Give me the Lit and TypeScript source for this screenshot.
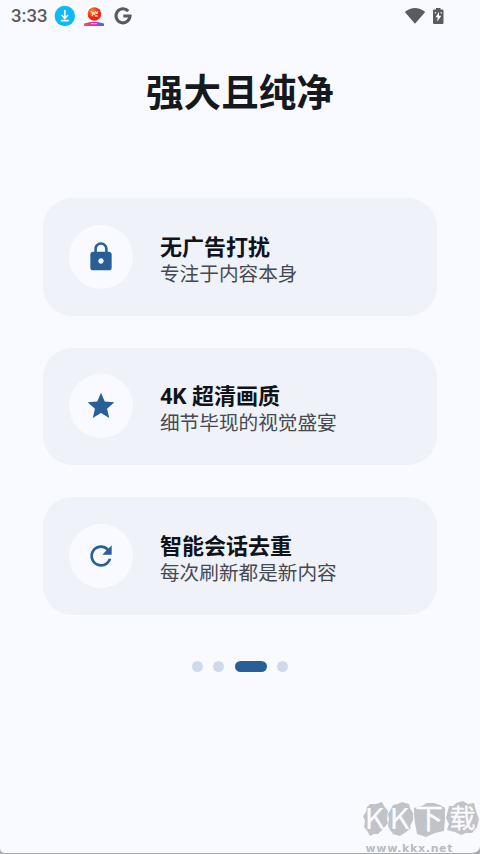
import { LitElement, html, css } from "lit";
import { customElement } from "lit/decorators.js";

const LOCK = "M18 8h-1V6c0-2.76-2.24-5-5-5S7 3.24 7 6v2H6c-1.1 0-2 .9-2 2v10c0 1.1.9 2 2 2h12c1.1 0 2-.9 2-2V10c0-1.1-.9-2-2-2zm-6 9c-1.1 0-2-.9-2-2s.9-2 2-2 2 .9 2 2-.9 2-2 2zm3.1-9H8.9V6c0-1.71 1.39-3.1 3.1-3.1 1.71 0 3.1 1.39 3.1 3.1v2z";
const STAR = "M12 17.27L18.18 21l-1.64-7.03L22 9.24l-7.19-.61L12 2 9.19 8.63 2 9.24l5.46 4.73L5.82 21z";
const REFRESH = "M17.65 6.35C16.2 4.9 14.21 4 12 4c-4.42 0-7.99 3.58-7.99 8s3.57 8 7.99 8c3.73 0 6.84-2.55 7.73-6h-2.08c-.82 2.33-3.04 4-5.65 4-3.31 0-6-2.69-6-6s2.69-6 6-6c1.66 0 3.14.69 4.22 1.78L13 11h7V4l-2.35 2.35z";

const FEATURES = [
  { icon: LOCK, title: "无广告打扰", text: "专注于内容本身" },
  { icon: STAR, title: "4K 超清画质", text: "细节毕现的视觉盛宴" },
  { icon: REFRESH, title: "智能会话去重", text: "每次刷新都是新内容" },
];

@customElement("status-bar")
class StatusBar extends LitElement {
  static styles = css`
    :host { display: flex; align-items: center; height: 32px; padding: 0 36px 0 11px; box-sizing: border-box; color: #5a5b5f; }
    .time { font: 500 18.6px/33px Roboto, sans-serif; width: 43px; }
    svg { display: block; flex: none; overflow: visible; }
    .g { margin-left: 10px; }
    .app { margin-left: 8px; }
    .space { flex: 1; }
    .bat { margin-left: 7px; }
  `;
  render() {
    return html`
      <span class="time">3:33</span>
      <svg width="22" height="22" viewBox="0 0 22 22"><circle cx="10.8" cy="11" r="10.2" fill="#0cb9fb"/><path d="M10.8 5v8M7.5 10l3.3 3.3 3.3-3.3M6.8 15.7h8" fill="none" stroke="#fff" stroke-width="1.7"/></svg>
      <svg class="app" width="20" height="20" viewBox="0 0 20 20"><defs><linearGradient id="b"><stop offset="0" stop-color="#ff5147"/><stop offset=".5" stop-color="#d42ac0"/><stop offset="1" stop-color="#2678f5"/></linearGradient><radialGradient id="r" cx=".35" cy=".3"><stop offset="0" stop-color="#ff8a25"/><stop offset="1" stop-color="#ee2310"/></radialGradient></defs><path d="M0 0h20v20H0z" fill="#fff"/><circle cx="10.4" cy="8" r="6.8" fill="url(#r)"/><path d="M7 5l2 3 1-2M9 8l-1 2M10.5 9l1-4 1.2 3L14 5M11 10h3" fill="none" stroke="#fff" stroke-width="1"/><path d="M0 20v-2.500Q10 14 20 17.5V20z" fill="url(#b)"/><path d="M7 17.7h6" stroke="#fff" stroke-width=".8"/></svg>
      <svg class="g" width="18" height="18" viewBox="0 0 18 18"><path d="M14.2 4.1A7 7 0 1 0 16 9H9.3" fill="none" stroke="currentColor" stroke-width="3.1"/></svg>
      <span class="space"></span>
      <svg width="20" height="17" viewBox="0 0 20 17"><path d="M-1.2 4Q9-4 19.200 4L9 15.7z" fill="currentColor"/></svg>
      <svg class="bat" width="11" height="17" viewBox="0 0 11 17"><path d="M3 0h4.5v1.5H9.5Q10.5 1.5 10.5 2.5V15Q10.5 16 9.500 16H1Q0 16 0 15V2.5Q0 1.5 1 1.5H3z" fill="currentColor"/><path d="M6 4L2.5 9.2h2.2l-.5 4.6 4.1-6H6z" fill="#fff"/><circle cx="2.5" cy="4.7" r=".8" fill="#fff"/><circle cx="8.2" cy="4.7" r=".8" fill="#fff"/></svg>
    `;
  }
}

@customElement("feature-card")
class FeatureCard extends LitElement {
  static properties = { icon: {}, heading: {}, text: {} };
  declare icon: string;
  declare heading: string;
  declare text: string;
  static styles = css`
    :host { display: flex; align-items: center; gap: 26.67px; height: 117.33px; padding: 0 26.67px; box-sizing: border-box; border-radius: 29px; background: #eff2f9; }
    .disc { display: grid; place-items: center; width: 64px; height: 64px; flex: none; border-radius: 50%; background: #f9faff; }
    .icon { width: 32px; height: 32px; fill: #295f97; }
    .copy { padding-top: 7.4px; }
    .title { font-size: 22px; line-height: 27px; font-weight: 700; color: #101317; white-space: nowrap; }
    .text { font-size: 19.65px; line-height: 27px; color: #45494f; font-weight: 400; white-space: nowrap; }
  `;
  render() {
    return html`
      <div class="disc"><svg class="icon" viewBox="0 0 24 24"><path d=${this.icon} /></svg></div>
      <div class="copy">
        <div class="title">${this.heading}</div>
        <div class="text">${this.text}</div>
      </div>
    `;
  }
}

@customElement("app-root")
class AppRoot extends LitElement {
  static styles = css`
    :host { display: block; position: relative; width: 480px; height: 854px; overflow: hidden; box-sizing: border-box; background: #f9faff; font-family: Roboto, "Noto Sans CJK SC", sans-serif; }
    h1 { margin: 33px 0 0; height: 56px; font-size: 37.6px; line-height: 56px; font-weight: 700; text-align: center; color: #15191e; }
    .cards { display: flex; flex-direction: column; gap: 32.1px; padding: 0 42.67px; margin-top: 77.4px; }
    .dots { display: flex; justify-content: center; gap: 10.67px; margin-top: 46.9px; }
    .dot { width: 10.67px; height: 10.67px; border-radius: 6px; background: #cedaea; }
    .dot.on { width: 32px; background: #295f97; }
    .mark { position: absolute; left: 362px; bottom: 0; display: block; }
    .mark .logo { font-family: "Noto Sans CJK SC", sans-serif; }
    .mark .site { font-family: "DejaVu Sans", sans-serif; font-weight: 700; }
    .edge { position: absolute; inset: auto 0 0 0; display: block; }
  `;
  render() {
    return html`
      <status-bar></status-bar>
      <h1>强大且纯净</h1>
      <div class="cards">
        ${FEATURES.map((f) => html`<feature-card .icon=${f.icon} .heading=${f.title} .text=${f.text}></feature-card>`)}
      </div>
      <div class="dots">
        ${[0, 1, 2, 3].map((i) => html`<span class="dot ${i === 2 ? "on" : ""}"></span>`)}
      </div>
      <svg class="edge" width="480" height="8" viewBox="0 0 480 8"><path d="M0 3Q1 7 5 7H472Q480 6 480 0V8H0z" fill="#aaabad"/></svg>
      <svg class="mark" width="118" height="64" viewBox="0 -10 118 64">
        <g fill="#c1c3c8">
          <path d="M5 7l3-3 6 0 6-2 2 4 4 5-1 8 1 4-5 6-5 5-4 0-4 2-2-4-4-5 1-6-2-5 3-4z"/>
          <path d="M31 5l5-1 4-2 7 2 1 4 3 5 0 7-3 6 1 2-5 4-6 4-7-2-3-4-2-4 1-7-1-5 3-5z"/>
          <path d="M52 8l8-2 5-3 7 0 6 2 5 3 0 10-1 13-9 2-9 4-9-3-2-11-1-8z"/>
          <path d="M87 6l4 0 3-3 7-2 5 3 6-1 2 8 3 8-2 8-5 6-6 0-5 2-6-3-8-2 2-6-3-6 2-8z"/>
        </g>
        <g class="logo" fill="#fafbff">
          <text x="2.500" y="29" font-size="29" textLength="20" lengthAdjust="spacingAndGlyphs">K</text>
          <text x="27.500" y="29" font-size="29" textLength="20" lengthAdjust="spacingAndGlyphs">K</text>
          <text x="53" y="29" font-size="28" stroke="#fafbff" stroke-width=".5">下</text>
          <text x="87.500" y="28" font-size="26" stroke="#fafbff" stroke-width=".3">载</text>
        </g>
        <text class="site" x="3.5" y="51.500" font-size="11" fill="#b9bbbf" textLength="87" lengthAdjust="spacing">www.kkx.net</text>
      </svg>
    `;
  }
}
